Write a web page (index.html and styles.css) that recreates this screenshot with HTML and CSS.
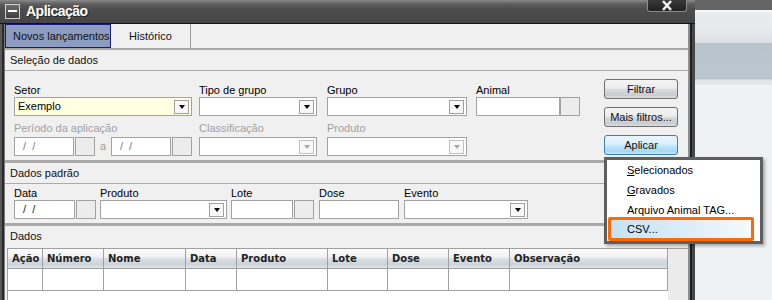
FILE: index.html
```html
<!DOCTYPE html>
<html lang="pt">
<head>
    <meta charset="UTF-8">
    <meta name="viewport" content="width=device-width, initial-scale=1.0">
    <title>Aplicação</title>
    <link rel="stylesheet" href="styles.css">
</head>
<body>
<div class="screen">
    <div class="window">
        <div class="titlebar">
            <span class="title-icon"></span>
            <span class="title-text">Aplicação</span>
            <span class="close-btn">
                <svg width="12" height="11" viewBox="0 0 12 11">
                    <path d="M2 1 L10 10 M10 1 L2 10" stroke="#f2f2f2" stroke-width="2.6" fill="none"/>
                </svg>
            </span>
        </div>
        <div class="frame">
            <div class="frame-left"></div>
            <div class="content">
                <div class="tabs">
                    <div class="tab tab-active">Novos lançamentos</div>
                    <div class="tab tab-hist">Histórico</div>
                </div>

                <!-- Seleção de dados -->
                <div class="group-title">Seleção de dados</div>
                <div class="group-body body-sel">
                    <div class="filters">
                        <div class="row">
                            <div class="field f-setor">
                                <span class="label">Setor</span>
                                <div class="combo combo-yellow"><span class="combo-text">Exemplo</span><span class="drop"></span></div>
                            </div>
                            <div class="field f-tipo">
                                <span class="label">Tipo de grupo</span>
                                <div class="combo"><span class="combo-text"></span><span class="drop"></span></div>
                            </div>
                            <div class="field f-grupo">
                                <span class="label">Grupo</span>
                                <div class="combo"><span class="combo-text"></span><span class="drop"></span></div>
                            </div>
                            <div class="field f-animal">
                                <span class="label">Animal</span>
                                <div class="pair pair-tight"><span class="box box-animal"></span><span class="box-btn"></span></div>
                            </div>
                        </div>
                        <div class="row row2">
                            <div class="field f-setor">
                                <span class="label disabled">Período da aplicação</span>
                                <div class="pair">
                                    <span class="box date-box disabled">/  /</span><span class="box-btn"></span>
                                    <span class="sep disabled">a</span>
                                    <span class="box date-box disabled">/  /</span><span class="box-btn"></span>
                                </div>
                            </div>
                            <div class="field f-tipo">
                                <span class="label disabled">Classificação</span>
                                <div class="combo"><span class="combo-text"></span><span class="drop drop-off"></span></div>
                            </div>
                            <div class="field f-grupo">
                                <span class="label disabled">Produto</span>
                                <div class="combo"><span class="combo-text"></span><span class="drop drop-off"></span></div>
                            </div>
                        </div>
                    </div>
                    <div class="actions">
                        <div class="btn">Filtrar</div>
                        <div class="btn">Mais filtros...</div>
                        <div class="btn btn-hot">Aplicar</div>
                    </div>
                </div>

                <!-- Dados padrão -->
                <div class="group-title">Dados padrão</div>
                <div class="group-body body-padrao">
                    <div class="row">
                        <div class="field f-data">
                            <span class="label">Data</span>
                            <div class="pair"><span class="box date-box">/  /</span><span class="box-btn"></span></div>
                        </div>
                        <div class="field f-produto">
                            <span class="label">Produto</span>
                            <div class="combo"><span class="combo-text"></span><span class="drop"></span></div>
                        </div>
                        <div class="field f-lote">
                            <span class="label">Lote</span>
                            <div class="pair"><span class="box box-lote"></span><span class="box-btn"></span></div>
                        </div>
                        <div class="field f-dose">
                            <span class="label">Dose</span>
                            <span class="box box-dose"></span>
                        </div>
                        <div class="field f-evento">
                            <span class="label">Evento</span>
                            <div class="combo"><span class="combo-text"></span><span class="drop"></span></div>
                        </div>
                    </div>
                </div>

                <!-- Dados -->
                <div class="group-title title-plain">Dados</div>
                <div class="grid">
                    <div class="grid-main">
                        <div class="grid-row">
                            <div class="th c-acao">Ação</div>
                            <div class="th c-numero">Número</div>
                            <div class="th c-nome">Nome</div>
                            <div class="th c-data">Data</div>
                            <div class="th c-produto">Produto</div>
                            <div class="th c-lote">Lote</div>
                            <div class="th c-dose">Dose</div>
                            <div class="th c-evento">Evento</div>
                            <div class="th c-obs">Observação</div>
                        </div>
                        <div class="grid-row">
                            <div class="td c-acao"></div>
                            <div class="td c-numero"></div>
                            <div class="td c-nome"></div>
                            <div class="td c-data"></div>
                            <div class="td c-produto"></div>
                            <div class="td c-lote"></div>
                            <div class="td c-dose"></div>
                            <div class="td c-evento"></div>
                            <div class="td c-obs"></div>
                        </div>
                    </div>
                    <div class="grid-side"></div>
                </div>
            </div>
            <div class="frame-right"></div>
        </div>
    </div>
    <div class="desktop"></div>

    <!-- menu do botão Aplicar -->
    <div class="menu">
        <div class="menu-item"><u>S</u>elecionados</div>
        <div class="menu-item"><u>G</u>ravados</div>
        <div class="menu-item">Arquivo Animal TAG...</div>
        <div class="menu-item menu-hot">CSV...</div>
    </div>
</div>
</body>
</html>
```

FILE: styles.css
```css
* {
    box-sizing: border-box;
}
body {
    margin: 0;
    font-family: "Liberation Sans", Arial, sans-serif;
    font-size: 11px;
    color: #000;
}
.screen {
    position: relative;
    width: 772px;
    height: 300px;
    overflow: hidden;
    display: flex;
}
.window {
    width: 695px;
    display: flex;
    flex-direction: column;
}

/* barra de título */
.titlebar {
    flex-shrink: 0;
    height: 24px;
    display: flex;
    align-items: center;
    padding-left: 5px;
    padding-bottom: 1px;
    background: linear-gradient(#8a8a8a, #5e5e5e 4px, #4c4c4c 9px, #454545 23px);
    border-bottom: 1px solid #111;
}
.title-icon {
    width: 15px;
    height: 15px;
    border: 1px solid #d0d0d0;
    background: linear-gradient(#6e6e6e, #3e3e3e);
    display: flex;
    align-items: center;
    justify-content: center;
}
.title-icon::after {
    content: "";
    width: 9px;
    height: 2px;
    background: #fff;
}
.title-text {
    margin-left: 6px;
    color: #fff;
    font-weight: bold;
    font-size: 14px;
    letter-spacing: -0.5px;
    text-shadow: 1px 1px 0 #222;
}
.close-btn {
    align-self: flex-start;
    margin-left: auto;
    margin-right: 8px;
    width: 40px;
    height: 12px;
    background: linear-gradient(#3a3a3a, #202020);
    border: 1px solid #8c8c8c;
    border-top: none;
    border-radius: 0 0 3px 3px;
    display: flex;
    justify-content: center;
}

/* moldura */
.frame {
    flex: 1;
    display: flex;
    min-height: 0;
}
.frame-left {
    width: 5px;
    background: linear-gradient(to right, #585858 0, #585858 2px, #2a2a2a 2px, #2a2a2a 4px, #7a7a7a 4px);
}
.frame-right {
    width: 7px;
    background: linear-gradient(to right, #8e8e8e 0, #8e8e8e 2px, #1e1e1e 2px, #1e1e1e 4px, #474747 4px);
}
.content {
    width: 683px;
    background: #f0f0f0;
}
.desktop {
    flex: 1;
    background: linear-gradient(#656565 0, #656565 10px, #f8fafb 10px, #e9ecef 14px, #e6e9ec 33px, #d9dee2 43px, #b9c3cc 43px, #bcc6cf 78px, #aab4bd 78px, #dfe3e7 80px, #e4e8eb 85px, #eef2f5 85px);
}

/* abas */
.tabs {
    display: flex;
    height: 26px;
    border-bottom: 2px solid #a8a8a8;
}
.tab {
    height: 24px;
    line-height: 24px;
    color: #111;
}
.tab-active {
    width: 106px;
    padding-left: 7px;
    line-height: 22px;
    background: #8c9cc1;
    border: 1px solid #1b1b7d;
}
.tab-hist {
    width: 80px;
    text-align: center;
    border-right: 1px solid #a0a0a0;
}

/* grupos */
.group-title {
    height: 21px;
    padding: 3px 0 0 5px;
    line-height: 14px;
    color: #111;
    border-bottom: 1px solid #ababab;
}
.title-plain {
    height: 20px;
    border-bottom: none;
}
.group-body {
    border-bottom: 3px solid #a9a9a9;
}
.body-sel {
    height: 92px;
    display: flex;
    justify-content: space-between;
}
.body-padrao {
    height: 42px;
    padding: 2px 0 0 9px;
}
.filters {
    padding: 12px 0 0 9px;
}
.row {
    display: flex;
}
.row2 {
    margin-top: 5px;
}
.row2 .label {
    margin-bottom: 2px;
}
.field {
    display: flex;
    flex-direction: column;
}
.label {
    display: block;
    height: 14px;
    line-height: 14px;
    white-space: nowrap;
}
.disabled {
    color: #a0a0a0;
}
.f-setor { width: 178px; margin-right: 7px; }
.f-tipo { width: 118px; margin-right: 10px; }
.f-grupo { width: 140px; margin-right: 9px; }
.f-animal { width: 104px; }
.f-data { width: 82px; margin-right: 4px; }
.f-produto { width: 127px; margin-right: 4px; }
.f-lote { width: 83px; margin-right: 5px; }
.f-dose { width: 80px; margin-right: 5px; }
.f-evento { width: 124px; }

/* campos */
.combo {
    height: 19px;
    display: flex;
    align-items: center;
    padding: 0 2px 0 3px;
    background: #fff;
    border: 1px solid #a2a2a2;
}
.combo-yellow {
    background: #ffffe1;
}
.combo-text {
    flex: 1;
    line-height: 17px;
}
.drop {
    width: 15px;
    height: 14px;
    border: 1px solid #a0a0a0;
    background: #f8f8f8;
    display: flex;
    align-items: center;
    justify-content: center;
}
.drop::after {
    content: "";
    border-left: 3px solid transparent;
    border-right: 3px solid transparent;
    border-top: 4px solid #000;
}
.drop-off {
    border-color: #c0c0c0;
}
.drop-off::after {
    border-top-color: #a8a8a8;
}
.pair {
    display: flex;
    gap: 1px;
}
.pair-tight {
    gap: 0;
}
.box {
    display: block;
    height: 19px;
    background: #fff;
    border: 1px solid #a2a2a2;
}
.date-box {
    width: 61px;
    padding-left: 8px;
    line-height: 17px;
    white-space: pre;
    color: #222;
}
.date-box.disabled {
    color: #7c7c7c;
}
.box-btn {
    width: 20px;
    height: 19px;
    background: #ececec;
    border: 1px solid #a2a2a2;
}
.sep {
    width: 14px;
    padding-left: 4px;
    line-height: 19px;
}
.box-animal { width: 84px; }
.box-lote { width: 62px; }
.box-dose { width: 80px; }

/* botões */
.actions {
    padding: 8px 10px 0 0;
    display: flex;
    flex-direction: column;
    gap: 8px;
}
.btn {
    width: 74px;
    height: 20px;
    line-height: 18px;
    text-align: center;
    color: #111;
    border: 1px solid #707070;
    border-radius: 3px;
    background: linear-gradient(#f4f4f4, #ececec 45%, #d6d9dc 55%, #c9cdd1 85%, #dcdfe2);
}
.btn-hot {
    border-color: #3c7fb1;
    background: linear-gradient(#eaf6fd, #d9f0fc 45%, #bee6fd 55%, #a7d9f5 85%, #c3e4f8);
}

/* grade */
.grid {
    display: flex;
    height: 60px;
    margin: 2px 0 0 2px;
}
.grid-main {
    width: 661px;
    background: #fff;
    border-left: 1px solid #a0a0a0;
    border-top: 1px solid #a0a0a0;
}
.grid-side {
    width: 20px;
    background: #ebebeb;
    border-top: 1px solid #a0a0a0;
}
.grid-row {
    display: flex;
}
.th {
    height: 20px;
    padding-left: 4px;
    line-height: 19px;
    font-family: "DejaVu Sans", Verdana, sans-serif;
    font-weight: bold;
    font-size: 10px;
    color: #222;
    white-space: nowrap;
    border-right: 1px solid #a0a0a0;
    border-bottom: 1px solid #a0a0a0;
    background: linear-gradient(#fcfcfc, #f1f2f4 40%, #d9dee3 55%, #ccd3d9 82%, #e2e5e8);
}
.td {
    height: 22px;
    border-right: 1px solid #a0a0a0;
    border-bottom: 1px solid #a0a0a0;
}
.c-acao { width: 35px; }
.c-numero { width: 61px; }
.c-nome { width: 82px; }
.c-data { width: 51px; }
.c-produto { width: 91px; }
.c-lote { width: 60px; }
.c-dose { width: 61px; }
.c-evento { width: 61px; }
.c-obs { width: 158px; }

/* menu suspenso */
.menu {
    position: absolute;
    left: 604px;
    top: 157px;
    width: 159px;
    height: 87px;
    background: #fff;
    border: 3px solid #5f5f5f;
    box-shadow: 2px 2px 3px rgba(0, 0, 0, 0.3);
}
.menu-item {
    height: 20px;
    line-height: 20px;
    padding-left: 20px;
    white-space: nowrap;
}
.menu-hot {
    height: 24px;
    margin: -3px 6px 0 1px;
    padding: 1px 0 0 16px;
    line-height: 17px;
    border: 3px solid #ff6a00;
    border-radius: 2px;
    background: linear-gradient(to right, #c6e2f6, #dcedf9 55%, #f5fafd);
}
```
